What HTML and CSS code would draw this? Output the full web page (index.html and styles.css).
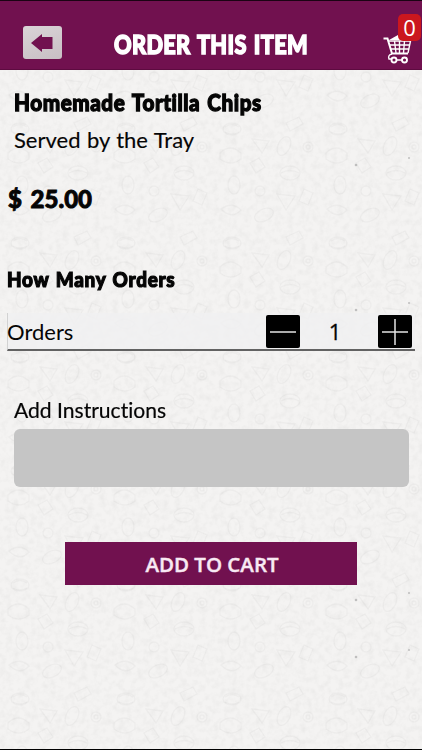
FILE: index.html
```html
<!DOCTYPE html>
<html lang="en">
<head>
<meta charset="utf-8">
<title>Order This Item</title>
<link rel="stylesheet" href="styles.css">
</head>
<body>
<div class="screen">
  <svg class="paper" width="422" height="750" aria-hidden="true">
    <defs>
      <filter id="grain" x="0" y="0" width="100%" height="100%">
        <feTurbulence type="fractalNoise" baseFrequency="0.16" numOctaves="3" seed="4"/>
        <feColorMatrix values="0 0 0 0 .5  0 0 0 0 .5  0 0 0 0 .49  .3 0 0 0 -.12"/>
      </filter>
      <pattern id="food" width="106" height="114" patternUnits="userSpaceOnUse">
        <g fill="none" stroke="#999" stroke-opacity=".075" stroke-width="1.300">
          <ellipse cx="20" cy="14" rx="9" ry="6"/>
          <path d="M13 12q7-5 14 0M13 17q7 4 14 0M40 24l17 2-7 12zM74 8l13-6 4 7-13 7z"/>
          <ellipse cx="72" cy="31" rx="6" ry="10" transform="rotate(25 72 31)"/>
          <circle cx="96" cy="32" r="5"/><circle cx="96" cy="32" r="2"/>
          <path d="M8 38q10-10 21 0v6q-10 8-21 0zM38 48l9-5 6 9-9 6z"/>
          <ellipse cx="78" cy="58" rx="10" ry="7"/><path d="M69 58q9-5 18 0"/>
          <ellipse cx="22" cy="70" rx="6" ry="9"/><circle cx="48" cy="76" r="5"/>
          <path d="M65 79l18 2-9 14zM92 74l9 4-5 12-9-4zM9 94q11-8 20 1-9 10-20-1z"/>
          <ellipse cx="52" cy="100" rx="10" ry="6" transform="rotate(-25 52 100)"/>
        </g>
      </pattern>
    </defs>
    <rect width="422" height="750" filter="url(#grain)"/>
    <rect width="422" height="750" fill="url(#food)"/>
    <g fill="#aaa" fill-opacity=".7">
      <circle cx="356" cy="164" r="1.300"/><circle cx="356" cy="309" r="1.300"/>
      <circle cx="356" cy="599" r="1.300"/><circle cx="356" cy="656" r="1.300"/>
      <circle cx="409" cy="157" r="1"/><circle cx="409" cy="302" r="1"/>
      <circle cx="409" cy="592" r="1"/><circle cx="409" cy="649" r="1"/>
    </g>
  </svg>

  <header class="topbar">
    <button class="back" aria-label="Back">
      <svg width="22" height="18" viewBox="0 0 22 18"><path d="M0 9L11 0v3h10.500v12H11v3z" fill="#71114f"/></svg>
    </button>
    <h1 class="heading">ORDER THIS ITEM</h1>
    <div class="cart">
      <svg width="30" height="28" viewBox="0 0 30 28" fill="none" stroke="#fff">
        <path d="M6 4l9-5 11 5z" fill="#fff" stroke="none"/>
        <path d="M.5 2.500h4L9 17.500h16" stroke-width="2"/>
        <path d="M5 5h22.500l-2.500 12M6 9h21M7.500 13h19M11.500 5l1.500 12M16.500 5v12M21.500 5l-1 12M9 18q-4.500 1-3 5h3M13 24h6" stroke-width="1.400"/>
        <circle cx="11" cy="24" r="2.500" stroke-width="1.900"/><circle cx="21.500" cy="24" r="2.500" stroke-width="1.900"/>
      </svg>
      <span class="badge">0</span>
    </div>
  </header>

  <main class="content">
    <h2 class="name">Homemade Tortilla Chips</h2>
    <p class="serving">Served by the Tray</p>
    <p class="price">$ 25.00</p>
    <h3 class="question">How Many Orders</h3>
    <div class="orders">
      <span class="orders-label">Orders</span>
      <button class="step" aria-label="Fewer"><svg width="26" height="26"><path d="M0 13h26" stroke="#e4e4e4" stroke-width="1.500"/></svg></button>
      <span class="count">1</span>
      <button class="step" aria-label="More"><svg width="26" height="26"><path d="M0 13h26M13 0v26" stroke="#e4e4e4" stroke-width="1.500"/></svg></button>
    </div>
    <label class="note-label" for="note">Add Instructions</label>
    <textarea class="note" id="note"></textarea>
    <button class="add"><span class="add-text">ADD TO CART</span></button>
  </main>
</div>
</body>
</html>
```
FILE: styles.css
```css
* { box-sizing: border-box; }
body { margin: 0; }
button { border: 0; padding: 0; }
h1, h2, h3, p { margin: 0; }
svg { display: block; overflow: visible; }

.screen {
  position: relative;
  width: 422px;
  height: 750px;
  overflow: hidden;
  background: #f4f3f2;
  border-top: 1px solid #1b0313;
  border-bottom: 1px solid #000;
  font-family: Lato, "Open Sans", sans-serif;
  font-variant-ligatures: none;
  color: #050505;
}
.paper { position: absolute; left: 0; top: 0; }

.topbar {
  position: relative;
  display: flex;
  height: 69px;
  padding: 0 1px 0 23px;
  background: #71114f;
  border-bottom: 1px solid #5d0b40;
}
.back {
  display: grid;
  place-items: center;
  width: 39px;
  height: 33px;
  margin-top: 25px;
  padding-right: 2px;
  border-radius: 3px;
  background: linear-gradient(160deg, #dad4d7, #c8bfc4);
}
.heading, .name, .serving, .price, .question, .orders-label, .note-label, .add-text {
  display: block;
  width: max-content;
  line-height: 30px;
  white-space: nowrap;
  transform-origin: left;
}
.heading {
  margin: 28px 0 0 52px;
  font-size: 27px;
  font-weight: 900;
  color: #fff;
  -webkit-text-stroke: 1.6px #fff;
  letter-spacing: .4px;
  word-spacing: 2px;
  transform: scaleX(.805);
}
.cart { position: absolute; left: 383px; top: 35px; }
.badge {
  position: absolute;
  left: 15px;
  top: -22px;
  width: 23px;
  height: 27px;
  border-radius: 5px;
  background: #cb171e;
  color: #fff;
  font: 22px/27px "Open Sans", sans-serif;
  text-align: center;
}

.content { position: relative; padding: 17px 7px 0; }
.name {
  margin-left: 7px;
  font-size: 23.5px;
  font-weight: 900;
  -webkit-text-stroke: 1.3px;
  letter-spacing: .6px;
  word-spacing: 2px;
  transform: scaleX(.88);
}
.serving { margin: 8px 0 0 7px; font-size: 22px; -webkit-text-stroke: .15px; word-spacing: .8px; }
.price {
  margin: 29px 0 0 1px;
  font-size: 24px;
  font-weight: 900;
  -webkit-text-stroke: .9px;
  word-spacing: 3px;
}
.question {
  margin-top: 50px;
  font-size: 21px;
  font-weight: 900;
  -webkit-text-stroke: 1.2px;
  letter-spacing: .8px;
  word-spacing: 1.5px;
  transform: scaleX(.9);
}
.orders {
  display: flex;
  align-items: flex-start;
  height: 38px;
  margin-top: 19px;
  padding-top: 2px;
  background: rgba(240, 240, 241, .8);
  border-left: 1px solid #d2d2d2;
  border-bottom: 2px solid #626262;
}
.orders-label { width: 258px; margin-left: -1px; margin-right: 1px; font-size: 22px; line-height: 34px; }
.step {
  display: grid;
  place-items: center;
  width: 34px;
  height: 33px;
  border-radius: 2px;
  background: #000;
}
.count {
  width: 78px;
  padding-right: 8px;
  font: 22px/33px "Open Sans", sans-serif;
  -webkit-text-stroke: .3px;
  text-align: center;
}
.note-label {
  margin: 44px 0 0 7px;
  font-size: 21.5px;
  -webkit-text-stroke: .2px;
  transform: scaleX(.98);
}
.note {
  display: block;
  width: 395px;
  height: 58px;
  margin: 4px 0 0 6.5px;
  border: 0;
  border-radius: 6px;
  background: #c5c5c5;
  resize: none;
}
.add {
  display: grid;
  place-items: center;
  width: 292px;
  height: 43px;
  margin: 55px 0 0 58px;
  background: #71114f;
  color: #f8e9f3;
}
.add-text {
  font: 600 20.5px/30px "Open Sans", sans-serif;
  -webkit-text-stroke: .4px;
  transform: translateX(1px);
}
```
